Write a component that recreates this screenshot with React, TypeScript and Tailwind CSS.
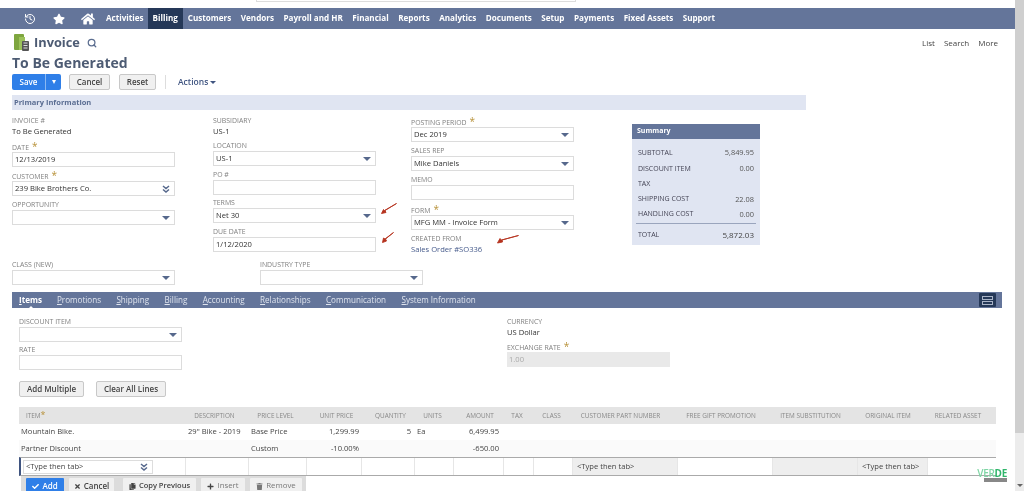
import { FaCheck, FaCopy, FaHome, FaPlus, FaStar, FaTimes, FaTrash } from 'react-icons/fa'
import { History, Search } from 'lucide-react'

const navItems = ['Customers', 'Vendors', 'Payroll and HR', 'Financial', 'Reports', 'Analytics', 'Documents', 'Setup', 'Payments', 'Fixed Assets', 'Support']
const tabs = ['Promotions', 'Shipping', 'Billing', 'Accounting', 'Relationships', 'Communication', 'System Information']

const columns = [
  { name: 'DESCRIPTION', w: 'w-[63px]', head: 'pr-[4px]' },
  { name: 'PRICE LEVEL', w: 'w-[58px]', head: 'pr-[3px]' },
  { name: 'UNIT PRICE', w: 'w-[55px]', head: 'pl-[6px]' },
  { name: 'QUANTITY', w: 'w-[53px]', head: 'pl-[6px]' },
  { name: 'UNITS', w: 'w-[39px]', head: 'pr-[2px]' },
  { name: 'AMOUNT', w: 'w-[50px]', head: 'pl-[4px]' },
  { name: 'TAX', w: 'w-[30px]', head: 'pr-[2px]' },
  { name: 'CLASS', w: 'w-[39px]', head: 'pr-[2px]' },
  { name: 'CUSTOMER PART NUMBER', w: 'w-[105px]', head: 'pr-[8px]' },
  { name: 'FREE GIFT PROMOTION', w: 'w-[95px]', head: 'pr-[7px]' },
  { name: 'ITEM SUBSTITUTION', w: 'w-[85px]', head: 'pr-[8px]' },
  { name: 'ORIGINAL ITEM', w: 'w-[70px]', head: 'pr-[8px]' },
  { name: 'RELATED ASSET', w: 'w-[69px]', head: 'pr-[7px]' },
]

function Star() {
  return <span className="ml-[3px] text-[10px] leading-[8px] text-[#b8923a]">*</span>
}

function Label({ text, required }: { text: string; required?: boolean }) {
  return (
    <div className="h-[10px] text-[6.9px] leading-[10px] text-[#808080] whitespace-nowrap">
      {text}
      {required && <Star />}
    </div>
  )
}

function Value({ text }: { text: string }) {
  return <div className="h-[10px] text-[7.6px] leading-[10px] text-[#333] whitespace-nowrap">{text}</div>
}

function Caret() {
  return <span className="ml-auto w-0 h-0 border-x-[4px] border-x-transparent border-t-[4px] border-t-[#56688c]" />
}

function DoubleCaret() {
  return (
    <svg className="ml-auto" width="8" height="8" viewBox="0 0 8 8" fill="none" stroke="#56688c" strokeWidth="1.5">
      <path d="M1 1l3 2.5L7 1M1 4.5L4 7l3-2.5" />
    </svg>
  )
}

function Input({ value, kind, w = 'w-[163px]' }: { value?: string; kind?: 'select' | 'multi'; w?: string }) {
  return (
    <div className={`${w} h-[15px] flex items-center px-[2px] pr-[4px] border border-[#dcdcdc] bg-white text-[7.6px] text-[#333] whitespace-nowrap`}>
      {value}
      {kind === 'select' && <Caret />}
      {kind === 'multi' && <DoubleCaret />}
    </div>
  )
}

function Button({ children, w }: { children: React.ReactNode; w: string }) {
  return (
    <div className={`${w} h-[16px] flex items-center justify-center rounded-[2px] border border-[#c8c8c8] bg-[#f0f0f0] text-[8px] font-semibold text-[#444] whitespace-nowrap`}>
      {children}
    </div>
  )
}

function RowBtn({ children, w, cls }: { children: React.ReactNode; w: string; cls?: string }) {
  return (
    <div className={`${w} h-[16px] flex items-center justify-center gap-[3px] rounded-[1px] whitespace-nowrap ${cls ?? 'bg-[#f0f0f0] text-[#444] text-[8px] font-semibold'}`}>
      {children}
    </div>
  )
}

function SumRow({ label, value, cls }: { label: string; value?: string; cls: string }) {
  return (
    <div className={`flex justify-between items-center px-[6px] text-[7px] text-[#445] ${cls}`}>
      <span>{label}</span>
      <span className="text-[7.4px] text-[#555]">{value}</span>
    </div>
  )
}

function Arrow({ cls, w, h, d }: { cls: string; w: number; h: number; d: string }) {
  return (
    <svg className={`absolute ${cls}`} width={w} height={h} viewBox={`0 0 ${w} ${h}`} fill="#b5331f" stroke="#b5331f" strokeWidth="0.9">
      <path d={d} />
    </svg>
  )
}

export default function App() {
  return (
    <div className="relative w-[1024px] h-[491px] overflow-hidden flex bg-white blur-[0.35px] font-['Open_Sans',sans-serif]">
      <div className="w-[1015px] shrink-0">
        {/* top strip */}
        <div className="h-[8px]">
          <div className="ml-[256px] w-[320px] h-[2px] border border-t-0 border-[#ddd]" />
        </div>

        {/* nav */}
        <div className="h-[21px] bg-[#64759a] flex items-center text-white text-[8.1px] font-bold whitespace-nowrap">
          <div className="w-[24px]" />
          <History className="w-[12px] h-[12px]" strokeWidth={2} />
          <FaStar className="ml-[17px] w-[12px] h-[12px]" />
          <FaHome className="ml-[16px] w-[14px] h-[14px]" />
          <span className="ml-[11px]">Activities</span>
          <span className="ml-[4px] h-full px-[5px] bg-[#253858] flex items-center">Billing</span>
          <div className="ml-[5px] flex gap-[9.5px]">
            {navItems.map(n => <span key={n}>{n}</span>)}
          </div>
        </div>

        {/* title */}
        <div className="h-[24px] mt-[2px] flex items-center pl-[14px] pr-[17px]">
          <svg width="16" height="18" viewBox="0 0 16 18">
            <rect x="0" y="0" width="10" height="16" rx="1" fill="#7ea63f" />
            <rect x="5" y="3" width="6" height="13" fill="#9cc25a" />
            <rect x="8" y="7" width="7" height="10" rx="1" fill="#555" />
            <path d="M9.5 9h4M9.5 11.5h4M9.5 14h4" stroke="#ddd" strokeWidth="1" />
          </svg>
          <span className="ml-[4px] text-[12.8px] font-bold text-[#4d5b73]">Invoice</span>
          <Search className="ml-[7px] w-[10px] h-[10px] text-[#5b6d8f]" strokeWidth={3} />
          <div className="ml-auto flex gap-[9px] text-[8px] text-[#444]">
            <span>List</span><span>Search</span><span>More</span>
          </div>
        </div>
        <div className="h-[15px] pl-[12px] flex items-center text-[14px] font-bold text-[#4d5b73]">To Be Generated</div>

        {/* actions */}
        <div className="h-[16px] mt-[4px] pl-[12px] flex items-center">
          <div className="w-[49px] h-[16px] flex items-stretch rounded-[2px] bg-[#2f7fe8] text-white text-[8px] font-semibold">
            <span className="w-[33px] flex items-center justify-center">Save</span>
            <span className="flex-1 flex items-center justify-center border-l border-[#8ab8f2]">
              <span className="w-0 h-0 border-x-[2.5px] border-x-transparent border-t-[4px] border-t-white" />
            </span>
          </div>
          <div className="ml-[8px]"><Button w="w-[41px]">Cancel</Button></div>
          <div className="ml-[9px]"><Button w="w-[37px]">Reset</Button></div>
          <div className="ml-[9px] w-px h-[14px] bg-[#ddd]" />
          <span className="ml-[12px] text-[8.5px] font-semibold text-[#3f5480]">Actions</span>
          <span className="ml-[2px] w-0 h-0 border-x-[3px] border-x-transparent border-t-[3px] border-t-[#3f5480]" />
        </div>

        {/* primary information */}
        <div className="mt-[5px] ml-[12px] w-[794px] h-[15px] bg-[#e0e5f2] flex items-center pl-[2px] text-[7.5px] font-bold text-[#5a6d92]">Primary Information</div>

        {/* form */}
        <div className="flex mt-[6px] h-[144px]">
          <div className="ml-[12px] w-[163px] shrink-0">
            <Label text="INVOICE #" />
            <Value text="To Be Generated" />
            <div className="mt-[6px]"><Label text="DATE" required /></div>
            <Input value="12/13/2019" />
            <div className="mt-[4px]"><Label text="CUSTOMER" required /></div>
            <Input value="239 Bike Brothers Co." kind="multi" />
            <div className="mt-[4px]"><Label text="OPPORTUNITY" /></div>
            <Input kind="select" />
          </div>
          <div className="ml-[38px] w-[163px] shrink-0">
            <Label text="SUBSIDIARY" />
            <Value text="US-1" />
            <div className="mt-[5px]"><Label text="LOCATION" /></div>
            <Input value="US-1" kind="select" />
            <div className="mt-[4px]"><Label text="PO #" /></div>
            <Input />
            <div className="mt-[3px]"><Label text="TERMS" /></div>
            <Input value="Net 30" kind="select" />
            <div className="mt-[4px]"><Label text="DUE DATE" /></div>
            <Input value="1/12/2020" />
          </div>
          <div className="ml-[35px] w-[163px] shrink-0">
            <div className="mt-[1px]"><Label text="POSTING PERIOD" required /></div>
            <Input value="Dec 2019" kind="select" />
            <div className="mt-[4px]"><Label text="SALES REP" /></div>
            <Input value="Mike Daniels" kind="select" />
            <div className="mt-[4px]"><Label text="MEMO" /></div>
            <Input />
            <div className="mt-[5px]"><Label text="FORM" required /></div>
            <Input value="MFG MM - Invoice Form" kind="select" />
            <div className="mt-[4px]"><Label text="CREATED FROM" /></div>
            <div className="h-[10px] text-[7.6px] leading-[10px] text-[#44598a]">Sales Order #SO336</div>
          </div>
          <div className="ml-[58px] mt-[8px] w-[128px] h-[121px] bg-[#e0e5f2] shrink-0">
            <div className="h-[15px] bg-[#64759a] flex items-center pl-[5px] text-[7px] font-bold text-white">Summary</div>
            <div className="h-[6px]" />
            <SumRow label="SUBTOTAL" value="5,849.95" cls="h-[16px]" />
            <SumRow label="DISCOUNT ITEM" value="0.00" cls="h-[16px]" />
            <SumRow label="TAX" cls="h-[15px]" />
            <SumRow label="SHIPPING COST" value="22.08" cls="h-[15px]" />
            <SumRow label="HANDLING COST" value="0.00" cls="h-[15px]" />
            <div className="mx-[4px] mt-[1px] h-px bg-[#9aa5bd]" />
            <div className="flex justify-between items-center px-[6px] h-[22px] text-[7px] text-[#445]">
              <span>TOTAL</span>
              <span className="text-[8px] text-[#444]">5,872.03</span>
            </div>
          </div>
        </div>

        <div className="flex">
          <div className="ml-[12px]">
            <Label text="CLASS (NEW)" />
            <Input kind="select" />
          </div>
          <div className="ml-[85px]">
            <Label text="INDUSTRY TYPE" />
            <Input kind="select" />
          </div>
        </div>

        {/* tabs */}
        <div className="mt-[7px] ml-[12px] w-[990px] h-[16px] bg-[#64759a] flex items-center text-[8.1px] text-[#dfe4ee] whitespace-nowrap">
          <span className="ml-[7px] font-bold text-white relative">
            <span className="underline">I</span>tems
            <span className="absolute left-[8px] -bottom-[4px] w-0 h-0 border-x-[4px] border-x-transparent border-b-[4px] border-b-white" />
          </span>
          <div className="ml-[15px] flex gap-[15.4px]">
            {tabs.map(t => (
              <span key={t}><span className="underline">{t[0]}</span>{t.slice(1)}</span>
            ))}
          </div>
          <div className="ml-auto mr-[6px] w-[17px] h-[14px] rounded-[1px] bg-[#253858] flex flex-col items-center justify-center gap-[1px]">
            <span className="w-[11px] h-[4px] border border-[#aab4c8]" />
            <span className="w-[11px] h-[4px] border border-[#aab4c8]" />
          </div>
        </div>

        {/* items subtab */}
        <div className="flex mt-[9px] h-[64px]">
          <div className="ml-[19px] w-[163px] shrink-0">
            <Label text="DISCOUNT ITEM" />
            <Input kind="select" />
            <div className="mt-[3px]"><Label text="RATE" /></div>
            <Input />
          </div>
          <div className="ml-[325px] w-[163px] shrink-0">
            <Label text="CURRENCY" />
            <Value text="US Dollar" />
            <div className="mt-[5px]"><Label text="EXCHANGE RATE" required /></div>
            <div className="h-[15px] flex items-center pl-[2px] bg-[#e9e9e9] text-[7.6px] text-[#aaa]">1.00</div>
          </div>
        </div>
        <div className="ml-[19px] flex gap-[12px]">
          <Button w="w-[65px]">Add Multiple</Button>
          <Button w="w-[70px]">Clear All Lines</Button>
        </div>

        {/* lines table */}
        <div className="mt-[10px] ml-[19px] w-[977px]">
          <div className="h-[17px] flex items-center bg-[#e4e4e4] text-[6.4px] text-[#888] whitespace-nowrap">
            <div className="w-[166px] pl-[7px]">ITEM<span className="text-[9px] leading-[6px] text-[#b8923a]">*</span></div>
            {columns.map(c => <div key={c.name} className={`${c.w} ${c.head} text-center`}>{c.name}</div>)}
          </div>
          <div className="h-[16px] flex items-center text-[7.6px] text-[#444] whitespace-nowrap">
            <div className="w-[166px] pl-[2px]">Mountain Bike.</div>
            <div className="w-[63px] pl-[3px]">29" Bike - 2019</div>
            <div className="w-[58px] pl-[3px]">Base Price</div>
            <div className="w-[55px] pr-[2px] text-right">1,299.99</div>
            <div className="w-[53px] pr-[3px] text-right">5</div>
            <div className="w-[39px] pl-[3px]">Ea</div>
            <div className="w-[50px] pr-[4px] text-right">6,499.95</div>
          </div>
          <div className="h-[17px] flex items-center bg-[#fafafa] text-[7.6px] text-[#444] whitespace-nowrap">
            <div className="w-[166px] pl-[2px]">Partner Discount</div>
            <div className="w-[63px]" />
            <div className="w-[58px] pl-[3px]">Custom</div>
            <div className="w-[55px] pr-[2px] text-right">-10.00%</div>
            <div className="w-[53px]" />
            <div className="w-[39px]" />
            <div className="w-[50px] pr-[4px] text-right">-650.00</div>
          </div>
          <div className="h-[19px] flex items-stretch border-y border-[#aaa] border-l-[2px] border-l-[#3f5480] text-[7.6px] text-[#444] whitespace-nowrap">
            <div className="w-[164px] pl-[2px] flex items-center">
              <div className="w-[130px] h-[14px] flex items-center px-[2px] pr-[4px] border border-[#ddd]">
                &lt;Type then tab&gt;
                <DoubleCaret />
              </div>
            </div>
            {columns.map(c => (
              <div key={c.name} className={`${c.w} flex items-center pl-[4px] border-l border-[#e6e6e6] ${c.name === 'CUSTOMER PART NUMBER' || c.name === 'ITEM SUBSTITUTION' || c.name === 'ORIGINAL ITEM' ? 'bg-[#eeeeee]' : ''}`}>
                {(c.name === 'CUSTOMER PART NUMBER' || c.name === 'ORIGINAL ITEM') && '<Type then tab>'}
              </div>
            ))}
          </div>
          <div className="ml-[2px] w-[285px] h-[20px] pt-[2px] pl-[5px] flex gap-[5px] bg-[#dcdcdc]">
            <RowBtn w="w-[38px]" cls="bg-[#2f7fe8] text-white text-[8px] font-semibold"><FaCheck className="w-[7px] h-[7px]" />Add</RowBtn>
            <RowBtn w="w-[45px]"><FaTimes className="w-[7px] h-[7px]" />Cancel</RowBtn>
            <div className="ml-[4px]">
              <RowBtn w="w-[73px]" cls="bg-[#f0f0f0] text-[#444] text-[7.5px] font-semibold"><FaCopy className="w-[7px] h-[7px]" />Copy Previous</RowBtn>
            </div>
            <RowBtn w="w-[44px]" cls="bg-[#f0f0f0] text-[#777] text-[7.8px]"><FaPlus className="w-[7px] h-[7px] text-[#444]" />Insert</RowBtn>
            <RowBtn w="w-[52px]" cls="bg-[#f0f0f0] text-[#777] text-[7.8px]"><FaTrash className="w-[7px] h-[7px]" />Remove</RowBtn>
          </div>
        </div>
      </div>

      {/* scrollbar */}
      <div className="flex-1 bg-[#ececec] flex flex-col">
        <div className="h-[433px] bg-[#cfcfcf]" />
        <div className="mt-auto h-[12px] flex items-center justify-center">
          <span className="w-0 h-0 border-x-[3px] border-x-transparent border-t-[3px] border-t-[#666]" />
        </div>
      </div>

      {/* annotation arrows */}
      <Arrow cls="left-[381px] top-[203px]" w={16} h={11} d="M15.5 0.5L4 7.5L5 9.5L0.5 10.5L2.5 6.5L3.5 7.5Z" />
      <Arrow cls="left-[382px] top-[232px]" w={12} h={11} d="M11.5 0.5L3.5 7L4.5 9L0.5 10.5L1.5 6L3 7Z" />
      <Arrow cls="left-[497px] top-[235px]" w={22} h={9} d="M21.5 0.5L5 5L5.5 7L0.5 8L3 3.5L4.5 5Z" />

      {/* watermark */}
      <div className="absolute left-[981px] top-[468px] w-[26px] flex flex-col items-end">
        <span className="text-[10px] leading-[10px] font-semibold tracking-[-0.3px] text-[#7fd6a5]">VER<span className="font-bold text-[#2fb56a]">DE</span></span>
        <span className="w-[23px] h-[4px] bg-[#888]" />
      </div>
    </div>
  )
}
